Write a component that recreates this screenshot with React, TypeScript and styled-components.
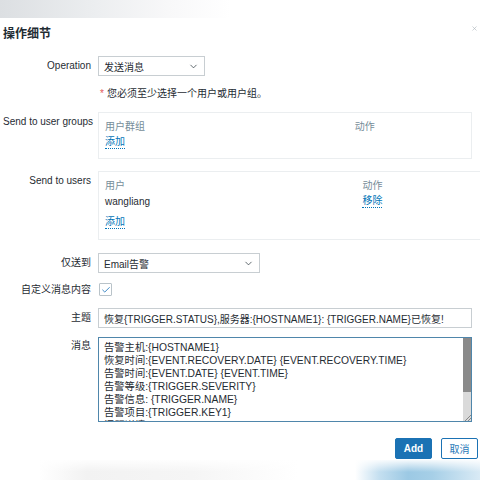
import React from 'react';
import styled, { createGlobalStyle } from 'styled-components';
import { ChevronDown, Check, X } from 'lucide-react';

const GlobalStyle = createGlobalStyle`
  html, body {
    margin: 0;
    padding: 0;
    width: 480px;
    height: 480px;
    overflow: hidden;
    background: #ffffff;
  }
  body {
    font-family: "Liberation Sans", Arial, "Noto Sans CJK SC", sans-serif;
    color: #1f2c33;
  }
`;

const Page = styled.div`
  width: 480px;
  height: 480px;
  display: flex;
  flex-direction: column;
  overflow: hidden;
`;

const TopShade = styled.div`
  height: 18px;
  flex-shrink: 0;
  background: linear-gradient(90deg, #dcdfe2 0%, #eceef0 20%, #f8f8f9 35%, #ffffff 48%);
`;

const BottomShade = styled.div`
  height: 20px;
  flex-shrink: 0;
  background:
    linear-gradient(180deg, rgba(255, 255, 255, 0.9) 0%, rgba(255, 255, 255, 0) 60%),
    linear-gradient(90deg, #ffffff 0%, #ffffff 8%, #f2f2f2 18%, #f5f5f5 40%, #ffffff 62%, #ffffff 74%, #c4dff0 79%, #9cc9e4 85%, #a6cfe7 90%, #d9eaf5 100%);
`;

const Dialog = styled.div`
  flex: 1;
  background: #ffffff;
  padding: 0 2px 0 3px;
  display: flex;
  flex-direction: column;
`;

const Header = styled.div`
  height: 24px;
  padding-top: 6px;
  display: flex;
  justify-content: space-between;
  align-items: flex-start;
  box-sizing: border-box;
`;

const Title = styled.h4`
  margin: 0;
  font-size: 12px;
  line-height: 18px;
  font-weight: bold;
  color: #1f2c33;
  font-family: "Noto Sans CJK SC", sans-serif;
`;

const CloseButton = styled.button`
  border: none;
  background: none;
  padding: 0;
  margin-top: 1px;
  color: #a8b2b8;
  display: flex;
  cursor: pointer;
`;

const Row = styled.div<{ $gap: number }>`
  display: grid;
  grid-template-columns: 88px 374px;
  column-gap: 7px;
  margin-top: ${(p) => p.$gap}px;
`;

const Label = styled.label<{ $pt?: number }>`
  text-align: right;
  font-size: 10px;
  line-height: 12px;
  padding-top: ${(p) => (p.$pt ?? 4)}px;
  color: #1f2c33;
  white-space: nowrap;
`;

const SelectBox = styled.div<{ $width: number }>`
  width: ${(p) => p.$width}px;
  height: 20px;
  box-sizing: border-box;
  border: 1px solid #c8ced2;
  background: #fff;
  display: flex;
  align-items: center;
  justify-content: space-between;
  padding: 0 5px 0 5px;
  font-size: 10px;
  color: #1f2c33;
`;

const Hint = styled.div`
  font-size: 10px;
  line-height: 12px;
  color: #1f2c33;
  padding-left: 2px;
`;

const Star = styled.span`
  color: #e45959;
  margin-right: 3px;
`;

const TableBox = styled.div<{ $width: number }>`
  width: ${(p) => p.$width}px;
  box-sizing: border-box;
  border: 1px solid #ebeef0;
  padding: 5px 6px 6px 6px;
  font-size: 10px;
`;

const TableRow = styled.div<{ $h: number }>`
  display: grid;
  grid-template-columns: 69.4% 1fr;
  height: ${(p) => p.$h}px;
  align-items: center;
`;

const HeadCell = styled.span`
  color: #768d99;
`;

const Cell = styled.span`
  color: #1f2c33;
`;

const LinkButton = styled.span`
  color: #0275b8;
  border-bottom: 1px dotted #0275b8;
  line-height: 12px;
  justify-self: start;
  cursor: pointer;
`;

const CheckBox = styled.span`
  width: 13px;
  height: 13px;
  box-sizing: border-box;
  border: 1px solid #b9c3c9;
  border-radius: 1px;
  display: flex;
  align-items: center;
  justify-content: center;
  color: #2f7fc1;
  margin-left: 1px;
`;

const TextInput = styled.input`
  width: 374px;
  height: 20px;
  box-sizing: border-box;
  border: 1px solid #c8ced2;
  padding: 0 5px;
  font-family: "Liberation Sans", Arial, "Noto Sans CJK SC", sans-serif;
  font-size: 10px;
  color: #1f2c33;
  outline: none;
`;

const MessageField = styled.div`
  position: relative;
  width: 374px;
  height: 85px;
`;

const MessageArea = styled.textarea`
  width: 100%;
  height: 100%;
  box-sizing: border-box;
  border: 1px solid #4f86ab;
  padding: 3px 14px 3px 5px;
  font-family: "Liberation Sans", Arial, "Noto Sans CJK SC", sans-serif;
  font-size: 10.3px;
  line-height: 13px;
  color: #1f2c33;
  resize: none;
  outline: none;
  overflow: hidden;
  display: block;
`;

const ScrollTrack = styled.div`
  position: absolute;
  top: 1px;
  right: 1px;
  bottom: 1px;
  width: 8px;
  background: #dadada;
`;

const ScrollThumb = styled.div`
  height: 54px;
  background: #8a8a8a;
`;

const Resizer = styled.div`
  position: absolute;
  right: 1px;
  bottom: 1px;
  width: 6px;
  height: 6px;
  background: linear-gradient(135deg, transparent 45%, #888 45%, #888 55%, transparent 55%, transparent 70%, #888 70%, #888 80%, transparent 80%);
`;

const Footer = styled.div`
  display: flex;
  justify-content: flex-end;
  gap: 9px;
  margin-top: 16px;
`;

const Button = styled.button<{ $primary?: boolean }>`
  height: 21px;
  min-width: 37px;
  padding: 0 7px;
  font-size: 10px;
  font-weight: ${(p) => (p.$primary ? 'bold' : 'normal')};
  font-family: "Liberation Sans", Arial, "Noto Sans CJK SC", sans-serif;
  border: 1px solid #1b72b4;
  background: ${(p) => (p.$primary ? '#1b72b4' : '#ffffff')};
  color: ${(p) => (p.$primary ? '#ffffff' : '#2a78b8')};
  border-radius: 2px;
  cursor: pointer;
`;

const message = [
  '告警主机:{HOSTNAME1}',
  '恢复时间:{EVENT.RECOVERY.DATE} {EVENT.RECOVERY.TIME}',
  '告警时间:{EVENT.DATE} {EVENT.TIME}',
  '告警等级:{TRIGGER.SEVERITY}',
  '告警信息: {TRIGGER.NAME}',
  '告警项目:{TRIGGER.KEY1}',
  '问题详情:{ITEM.NAME}:{ITEM.VALUE}',
  '当前状态:{TRIGGER.STATUS}:{ITEM.VALUE1}',
  '事件ID:{EVENT.ID}',
].join('\n');

const App: React.FC = () => {
  return (
    <>
      <GlobalStyle />
      <Page>
        <TopShade />
        <Dialog>
          <Header>
            <Title>操作细节</Title>
            <CloseButton>
              <X size={7} strokeWidth={2} />
            </CloseButton>
          </Header>

          <Row $gap={14}>
            <Label>Operation</Label>
            <SelectBox $width={107}>
              <span>发送消息</span>
              <ChevronDown size={11} strokeWidth={1.5} />
            </SelectBox>
          </Row>

          <Row $gap={12}>
            <span />
            <Hint>
              <Star>*</Star>您必须至少选择一个用户或用户组。
            </Hint>
          </Row>

          <Row $gap={12}>
            <Label>Send to user groups</Label>
            <TableBox $width={374}>
              <TableRow $h={14}>
                <HeadCell>用户群组</HeadCell>
                <HeadCell>动作</HeadCell>
              </TableRow>
              <TableRow $h={20}>
                <LinkButton>添加</LinkButton>
              </TableRow>
            </TableBox>
          </Row>

          <Row $gap={12}>
            <Label>Send to users</Label>
            <TableBox $width={385}>
              <TableRow $h={14}>
                <HeadCell>用户</HeadCell>
                <HeadCell>动作</HeadCell>
              </TableRow>
              <TableRow $h={20}>
                <Cell>wangliang</Cell>
                <LinkButton>移除</LinkButton>
              </TableRow>
              <TableRow $h={22}>
                <LinkButton>添加</LinkButton>
              </TableRow>
            </TableBox>
          </Row>

          <Row $gap={13}>
            <Label>仅送到</Label>
            <SelectBox $width={162}>
              <span>Email告警</span>
              <ChevronDown size={11} strokeWidth={1.5} />
            </SelectBox>
          </Row>

          <Row $gap={10}>
            <Label $pt={1}>自定义消息内容</Label>
            <CheckBox>
              <Check size={10} strokeWidth={2.2} />
            </CheckBox>
          </Row>

          <Row $gap={12}>
            <Label>主题</Label>
            <TextInput
              readOnly
              value="恢复{TRIGGER.STATUS},服务器:{HOSTNAME1}: {TRIGGER.NAME}已恢复!"
            />
          </Row>

          <Row $gap={9}>
            <Label $pt={3}>消息</Label>
            <MessageField>
              <MessageArea readOnly value={message} />
              <ScrollTrack>
                <ScrollThumb />
              </ScrollTrack>
              <Resizer />
            </MessageField>
          </Row>

          <Footer>
            <Button $primary>Add</Button>
            <Button>取消</Button>
          </Footer>
        </Dialog>
        <BottomShade />
      </Page>
    </>
  );
};

export default App;
